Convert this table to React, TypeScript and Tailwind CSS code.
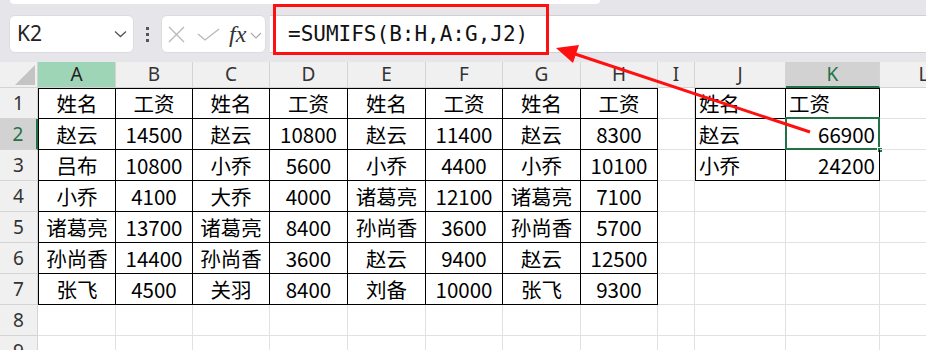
import React from 'react';

const cols = ['A', 'B', 'C', 'D', 'E', 'F', 'G', 'H', 'I', 'J', 'K', 'L'];

const main = [
  ['姓名', '工资', '姓名', '工资', '姓名', '工资', '姓名', '工资'],
  ['赵云', '14500', '赵云', '10800', '赵云', '11400', '赵云', '8300'],
  ['吕布', '10800', '小乔', '5600', '小乔', '4400', '小乔', '10100'],
  ['小乔', '4100', '大乔', '4000', '诸葛亮', '12100', '诸葛亮', '7100'],
  ['诸葛亮', '13700', '诸葛亮', '8400', '孙尚香', '3600', '孙尚香', '5700'],
  ['孙尚香', '14400', '孙尚香', '3600', '赵云', '9400', '赵云', '12500'],
  ['张飞', '4500', '关羽', '8400', '刘备', '10000', '张飞', '9300'],
];

const side = [
  ['姓名', '工资'],
  ['赵云', '66900'],
  ['小乔', '24200'],
];

const cjk = { fontFamily: '"Noto Sans CJK SC", "Noto Sans", sans-serif' };
const ui = { fontFamily: '"Noto Sans", "Noto Sans CJK SC", sans-serif' };

function Cell({ r, c }: { r: number; c: number }) {
  const inMain = r >= 1 && r <= 7 && c <= 7;
  const inSide = r >= 1 && r <= 3 && (c === 9 || c === 10);
  let text = '';
  if (inMain) text = main[r - 1][c];
  if (inSide) text = side[r - 1][c - 9];

  let cls = 'relative flex items-center text-[20.5px] leading-none text-black ';
  if (inMain || inSide) {
    cls += 'border-r border-b border-black ';
    if (r === 1) cls += 'border-t ';
    if (c === 0 || c === 9) cls += 'border-l ';
  } else {
    cls += 'border-r border-b border-[#e1e1e1] ';
  }
  if (inMain) cls += 'justify-center';
  else if (c === 9 || (c === 10 && r === 1)) cls += 'justify-start pl-[3px]';
  else cls += 'justify-end pr-[4px]';

  const selected = r === 2 && c === 10;

  return (
    <div className={cls} style={cjk}>
      {text}
      {selected && (
        <>
          <div className="absolute -left-px -top-[2px] -right-px -bottom-px border-2 border-[#217346]" />
          <div className="absolute -right-[4px] -bottom-[4px] w-[6px] h-[6px] bg-[#217346] border border-white" />
        </>
      )}
    </div>
  );
}

export default function App() {
  return (
    <div className="relative w-[926px] h-[350px] overflow-hidden bg-white">
      {/* --- FORMULA BAR --- */}
      <div className="relative h-[62px] bg-[#e6e6ea]">
        <div className="absolute left-[10px] top-0 w-[590px] h-[4px] bg-white rounded-b-[6px]" />
        <div className="flex items-start pt-[15px]">
          <div className="ml-[9px] w-[125px] h-[38px] bg-white rounded-[6px] border border-[#dcdce0] flex items-center justify-between pl-[7px] pr-[6px]">
            <span className="text-[21px] text-[#222]" style={ui}>K2</span>
            <svg width="13" height="8" viewBox="0 0 13 8">
              <path d="M1 1.5 L6.5 6.5 L12 1.5" fill="none" stroke="#555" strokeWidth="1.3" />
            </svg>
          </div>
          <div className="w-[27px] h-[38px] flex flex-col items-center justify-center gap-[3px]">
            <div className="w-[3px] h-[3px] bg-[#555]" />
            <div className="w-[3px] h-[3px] bg-[#555]" />
            <div className="w-[3px] h-[3px] bg-[#555]" />
          </div>
          <div className="w-[105px] h-[38px] bg-white rounded-[6px] border border-[#dcdce0] flex items-center pl-[6px]">
            <svg width="17" height="17" viewBox="0 0 17 17">
              <path d="M1 1 L16 16 M16 1 L1 16" stroke="#b8b8b8" strokeWidth="1.3" />
            </svg>
            <svg width="23" height="13" viewBox="0 0 23 13" className="ml-[12px]">
              <path d="M1 6 L8 12 L22 1" fill="none" stroke="#b8b8b8" strokeWidth="1.3" />
            </svg>
            <span className="ml-[9px] text-[24px] italic text-[#333] leading-none" style={{ fontFamily: '"Liberation Serif", serif' }}>
              fx
            </span>
            <svg width="12" height="7" viewBox="0 0 12 7" className="ml-[4px] mt-[2px]">
              <path d="M1 1 L6 6 L11 1" fill="none" stroke="#aaa" strokeWidth="1.2" />
            </svg>
          </div>
          <div className="ml-[4px] flex-1 h-[38px] bg-white border-y border-[#cfcfd4] flex items-center pl-[18px]">
            <span className="text-[21px] text-[#111] leading-none" style={{ fontFamily: '"DejaVu Sans Mono", monospace' }}>
              =SUMIFS(B:H,A:G,J2)
            </span>
          </div>
        </div>
      </div>

      {/* --- SHEET GRID --- */}
      <div className="grid grid-cols-[38px_78px_77px_77px_78px_78px_77px_78px_77px_37px_91px_94px_88px] grid-rows-[26px_31px_31px_31px_31px_31px_31px_31px_31px_31px]">
        <div className="relative bg-[#f0f0f0] border-r border-b border-[#d4d4d4]">
          <svg width="20" height="20" viewBox="0 0 20 20" className="absolute right-[2px] bottom-[2px]">
            <polygon points="20,0 20,20 0,20" fill="#c4c4c4" />
          </svg>
        </div>
        {cols.map((c, i) => (
          <div
            key={c}
            className={
              'flex items-center justify-center text-[19px] leading-none border-r ' +
              (i === 0
                ? 'bg-[#9fd5b7] text-[#222] border-b border-[#d4d4d4]'
                : i === 10
                ? 'bg-[#d2d2d2] text-[#217346] border-r-[#d4d4d4] border-b-2 border-b-[#217346]'
                : 'bg-[#f0f0f0] text-[#333] border-b border-[#d4d4d4]')
            }
            style={ui}
          >
            {c}
          </div>
        ))}
        {[1, 2, 3, 4, 5, 6, 7, 8, 9].map((r) => (
          <React.Fragment key={r}>
            <div
              className={
                'flex items-center justify-center text-[19px] leading-none border-b border-[#d4d4d4] ' +
                (r === 2
                  ? 'bg-[#d2d2d2] text-[#217346] border-r-2 border-r-[#217346]'
                  : 'bg-[#f0f0f0] text-[#333] border-r')
              }
              style={ui}
            >
              {r}
            </div>
            {cols.map((_, c) => (
              <Cell key={c} r={r} c={c} />
            ))}
          </React.Fragment>
        ))}
      </div>

      {/* --- ANNOTATION --- */}
      <div className="absolute left-[273px] top-[4px] w-[276px] h-[51px] border-[3px] border-[#ff1010]" />
      <svg className="absolute left-0 top-0" width="926" height="350" viewBox="0 0 926 350">
        <line x1="810" y1="132" x2="572" y2="53" stroke="#ff1010" strokeWidth="3" />
        <polygon points="556,48 579,45 573,63" fill="#ff1010" />
      </svg>
    </div>
  );
}
